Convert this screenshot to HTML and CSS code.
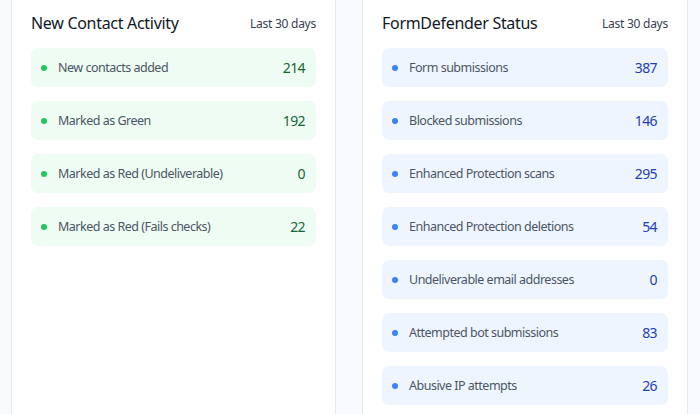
FILE: index.html
```html
<!DOCTYPE html>
<html lang="en">
<head>
<meta charset="utf-8">
<title>Dashboard</title>
<link rel="stylesheet" href="styles.css">
</head>
<body>
<main class="grid">
  <section class="card">
    <header class="card-head">
      <h2 class="card-title">New Contact Activity</h2>
      <span class="card-range">Last 30 days</span>
    </header>
    <ul class="stats">
      <li class="stat stat-green"><span class="dot"></span><span class="label">New contacts added</span><span class="value">214</span></li>
      <li class="stat stat-green"><span class="dot"></span><span class="label">Marked as Green</span><span class="value">192</span></li>
      <li class="stat stat-green"><span class="dot"></span><span class="label">Marked as Red (Undeliverable)</span><span class="value">0</span></li>
      <li class="stat stat-green"><span class="dot"></span><span class="label">Marked as Red (Fails checks)</span><span class="value">22</span></li>
    </ul>
  </section>
  <section class="card">
    <header class="card-head">
      <h2 class="card-title">FormDefender Status</h2>
      <span class="card-range">Last 30 days</span>
    </header>
    <ul class="stats">
      <li class="stat stat-blue"><span class="dot"></span><span class="label">Form submissions</span><span class="value">387</span></li>
      <li class="stat stat-blue"><span class="dot"></span><span class="label">Blocked submissions</span><span class="value">146</span></li>
      <li class="stat stat-blue"><span class="dot"></span><span class="label">Enhanced Protection scans</span><span class="value">295</span></li>
      <li class="stat stat-blue"><span class="dot"></span><span class="label">Enhanced Protection deletions</span><span class="value">54</span></li>
      <li class="stat stat-blue"><span class="dot"></span><span class="label">Undeliverable email addresses</span><span class="value">0</span></li>
      <li class="stat stat-blue"><span class="dot"></span><span class="label">Attempted bot submissions</span><span class="value">83</span></li>
      <li class="stat stat-blue"><span class="dot"></span><span class="label">Abusive IP attempts</span><span class="value">26</span></li>
    </ul>
  </section>
</main>
</body>
</html>
```
FILE: styles.css
```css
* { box-sizing: border-box; }
html, body {
  margin: 0;
  padding: 0;
  background: #f7f9fc;
  font-family: "Noto Sans", "Open Sans", sans-serif;
  height: 414px;
  overflow: hidden;
}
.grid {
  display: grid;
  grid-template-columns: 325px 326px;
  column-gap: 26px;
  padding: 0 0 0 11px;
  margin-top: -20px;
}
.card {
  background: #ffffff;
  border: 1px solid #e6e9ef;
  border-radius: 10px;
  padding: 31px 19px 40px 19px;
  min-height: 460px;
}
.card-head {
  display: flex;
  justify-content: space-between;
  align-items: center;
  height: 22px;
  margin-bottom: 14px;
}
.card-title {
  margin: 0;
  font-size: 16px;
  font-weight: 400;
  letter-spacing: -0.3px;
  color: #111827;
}
.card-range {
  font-size: 12px;
  letter-spacing: -0.25px;
  color: #374151;
}
.stats {
  list-style: none;
  margin: 0;
  padding: 0;
  display: flex;
  flex-direction: column;
  gap: 14px;
}
.stat {
  display: flex;
  align-items: center;
  height: 39px;
  padding: 0 11px 0 10px;
  border-radius: 7px;
}
.dot {
  width: 6px;
  height: 6px;
  border-radius: 50%;
  margin-right: 11px;
  flex: none;
}
.label {
  flex: 1;
  font-size: 12.5px;
  letter-spacing: -0.5px;
  color: #4b5563;
}
.value {
  font-size: 14px;
  letter-spacing: -0.6px;
  font-weight: 400;
}
.stat-green { background: #effcf3; }
.stat-green .dot { background: #22c55e; }
.stat-green .value { color: #166534; }
.stat-blue { background: #eff5ff; }
.stat-blue .dot { background: #3b82f6; }
.stat-blue .value { color: #1e40af; }
```
